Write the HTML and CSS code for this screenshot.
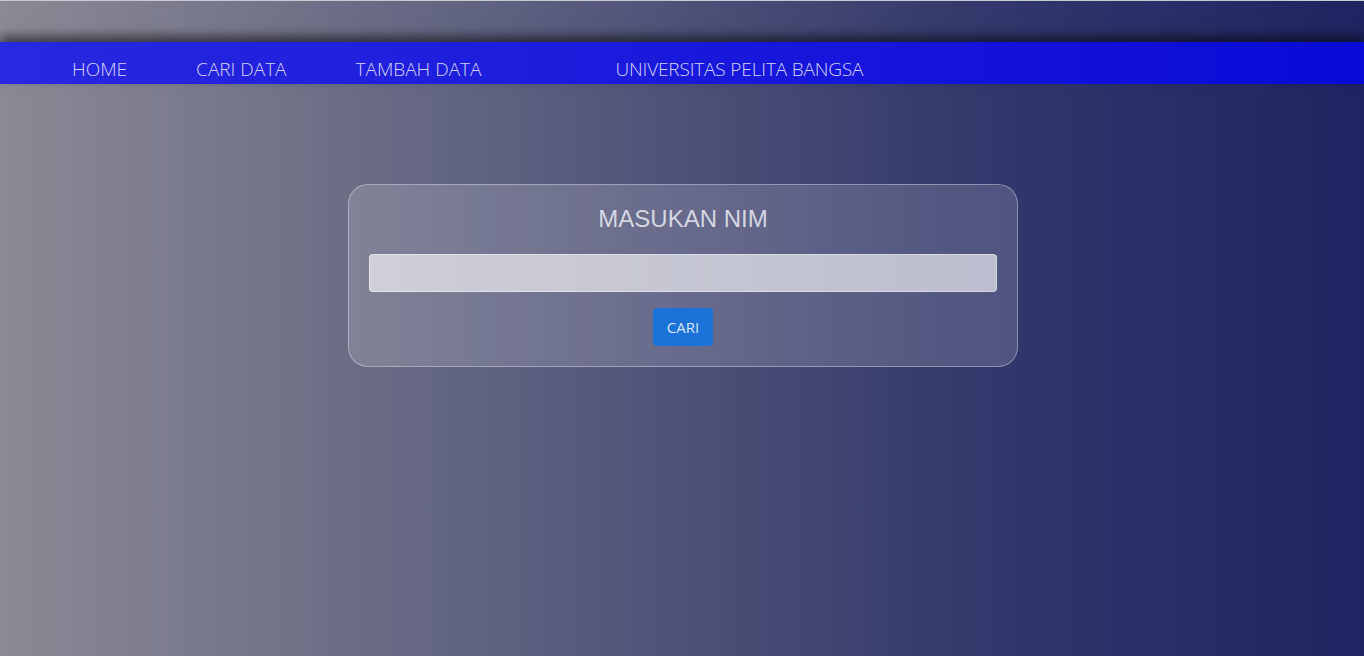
FILE: index.html
```html
<!DOCTYPE html>
<html>
<head>
<meta charset="utf-8">
<link rel="stylesheet" href="styles.css">
</head>
<body>
<div class="topbar"></div>
<nav class="navbar">
  <a class="nav-link" href="#">HOME</a>
  <a class="nav-link" href="#">CARI DATA</a>
  <a class="nav-link" href="#">TAMBAH DATA</a>
  <span class="brand">UNIVERSITAS PELITA BANGSA</span>
</nav>
<main class="content">
  <form class="card">
    <h2 class="card-title">MASUKAN NIM</h2>
    <input class="nim-input" type="text">
    <button class="btn" type="button">CARI</button>
  </form>
</main>
</body>
</html>
```
FILE: styles.css
```css
html, body {
  margin: 0;
  padding: 0;
}
body {
  min-height: 100vh;
  background: linear-gradient(to right, #8a8a95 0%, #5a5d7d 40%, #343a6c 70%, #1d2461 100%);
  font-family: "Open Sans", "Liberation Sans", sans-serif;
}
.topbar {
  height: 41px;
  border-top: 1px solid #c9c9d1;
}
.navbar {
  position: relative;
  height: 42px;
  display: flex;
  align-items: center;
  padding-left: 72px;
  background: linear-gradient(to right, #2828e0, #0a0ad8);
  box-shadow: 0 -6px 10px rgba(0, 0, 0, 0.55);
}
.nav-link, .brand {
  color: #d3d3f2;
  text-decoration: none;
  font-size: 19px;
  font-weight: 300;
  padding-top: 11px;
}
.nav-link {
  margin-right: 69px;
}
.brand {
  margin-left: 65px;
  letter-spacing: -0.15px;
}
.content {
  display: flex;
  justify-content: center;
  padding-top: 100px;
  padding-left: 2px;
}
.card {
  width: 628px;
  padding: 20px 20px 20px;
  border: 1px solid rgba(255, 255, 255, 0.35);
  border-radius: 20px;
  background: rgba(255, 255, 255, 0.15);
  display: flex;
  flex-direction: column;
  align-items: center;
}
.card-title {
  margin: 0 0 21px;
  font-family: "Liberation Sans", Arial, sans-serif;
  font-size: 24px;
  font-weight: 400;
  line-height: 28px;
  color: #d6d7e2;
}
.nim-input {
  box-sizing: border-box;
  width: 100%;
  height: 38px;
  margin: 0 0 16px;
  border: 1px solid rgba(255, 255, 255, 0.4);
  border-radius: 4px;
  background: rgba(255, 255, 255, 0.62);
}
.btn {
  height: 38px;
  width: 60px;
  border: none;
  border-radius: 4px;
  background: #1b73d8;
  color: #dce6f7;
  font-family: "Open Sans", "Liberation Sans", sans-serif;
  font-size: 15px;
  padding: 0;
}
```
